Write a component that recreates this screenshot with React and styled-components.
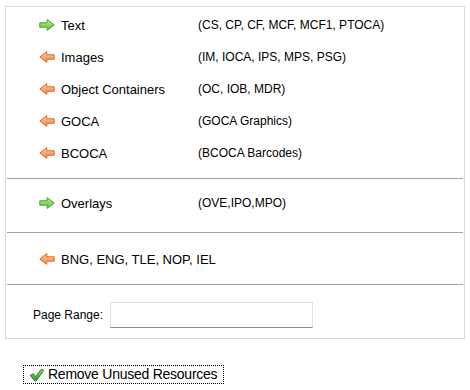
import React from 'react'
import styled, { createGlobalStyle } from 'styled-components'

const GlobalStyle = createGlobalStyle`
    body{
        margin:0;
        background:#fff;
        font-family:"Liberation Sans", Arial, sans-serif;
        color:#000;
    }
`

const groups = [
    {
        pad: '2px 0 9px',
        rows: [
            { dir: 'right', label: 'Text', codes: '(CS, CP, CF, MCF, MCF1, PTOCA)' },
            { dir: 'left', label: 'Images', codes: '(IM, IOCA, IPS, MPS, PSG)' },
            { dir: 'left', label: 'Object Containers', codes: '(OC, IOB, MDR)' },
            { dir: 'left', label: 'GOCA', codes: '(GOCA Graphics)' },
            { dir: 'left', label: 'BCOCA', codes: '(BCOCA Barcodes)' },
        ],
    },
    {
        pad: '8px 0 13px',
        rows: [{ dir: 'right', label: 'Overlays', codes: '(OVE,IPO,MPO)' }],
    },
    {
        pad: '10px 0 9px',
        rows: [{ dir: 'left', label: 'BNG, ENG, TLE, NOP, IEL' }],
    },
]

function Arrow({ dir }) {
    const green = dir === 'right'
    const id = green ? 'gArrow' : 'oArrow'
    return (
        <Icon width="16" height="12" viewBox="0 0 16 12">
            <defs>
                <linearGradient id={id} x1="0" y1="0" x2="0" y2="1">
                    <stop offset="0" stopColor={green ? '#b6ee8e' : '#ffc9a0'} />
                    <stop offset="1" stopColor={green ? '#5fc23a' : '#f38a45'} />
                </linearGradient>
            </defs>
            <path
                d="M0.8 3.8 H8.2 V0.6 L15.2 6 L8.2 11.4 V8.2 H0.8 Z"
                fill={`url(#${id})`}
                stroke={green ? '#46a326' : '#dc6a28'}
                strokeWidth="1"
                strokeLinejoin="round"
                transform={green ? undefined : 'translate(16 0) scale(-1 1)'}
            />
        </Icon>
    )
}

function Check() {
    return (
        <svg width="16" height="14" viewBox="0 0 16 14">
            <defs>
                <linearGradient id="chk" x1="0" y1="0" x2="0" y2="1">
                    <stop offset="0" stopColor="#8ee36a" />
                    <stop offset="1" stopColor="#2f9a1f" />
                </linearGradient>
            </defs>
            <path
                d="M1.2 7.4 L4.2 5.6 L6.6 8.6 L12.6 1 L14.8 2.4 L7.2 12.8 L5.8 12.8 Z"
                fill="url(#chk)"
                stroke="#23781a"
                strokeWidth="0.9"
                strokeLinejoin="round"
            />
        </svg>
    )
}

export default function App() {
    return (
        <Page>
            <GlobalStyle />
            <Panel>
                {groups.map((g, gi) => (
                    <Group key={gi} pad={g.pad} first={gi === 0}>
                        {g.rows.map((r) => (
                            <Row key={r.label}>
                                <Arrow dir={r.dir} />
                                <Label wide={!r.codes}>{r.label}</Label>
                                {r.codes && <Codes>{r.codes}</Codes>}
                            </Row>
                        ))}
                    </Group>
                ))}
                <RangeGroup>
                    <RangeLabel>Page Range:</RangeLabel>
                    <RangeInput type="text" />
                </RangeGroup>
            </Panel>
            <Button>
                <Check />
                <span>Remove Unused Resources</span>
            </Button>
        </Page>
    )
}

const Page = styled.div`
    padding:6px 5px;
`
const Panel = styled.div`
    width:458px;
    border:1px solid #d9d9d9;
    background:#fff;
`
const Group = styled.div`
    padding:${(p) => p.pad};
    margin:0 1px;
    border-top:${(p) => (p.first ? 'none' : '1px solid #a3a3a3')};
`
const Row = styled.div`
    display:flex;
    align-items:center;
    height:32px;
    padding-left:32px;
`
const Icon = styled.svg`
    flex:none;
    margin-right:6px;
`
const Label = styled.div`
    width:${(p) => (p.wide ? 'auto' : '137px')};
    font-size:13px;
`
const Codes = styled.div`
    font-size:12px;
`
const RangeGroup = styled.div`
    display:flex;
    align-items:center;
    margin:0 1px;
    padding:17px 0 10px 26px;
    border-top:1px solid #a3a3a3;
`
const RangeLabel = styled.div`
    font-size:12px;
    margin-right:7px;
`
const RangeInput = styled.input`
    box-sizing:border-box;
    width:203px;
    height:26px;
    border:1px solid #e2e2e2;
    border-bottom-color:#8a8a8a;
    background:#fff;
    outline:none;
`
const Button = styled.div`
    display:inline-flex;
    align-items:center;
    gap:3px;
    box-sizing:border-box;
    width:201px;
    height:19px;
    margin:26px 0 0 18px;
    padding-left:5px;
    border:1px dotted #000;
    font-size:14px;
    letter-spacing:-0.25px;
    span{
        line-height:17px;
    }
`
